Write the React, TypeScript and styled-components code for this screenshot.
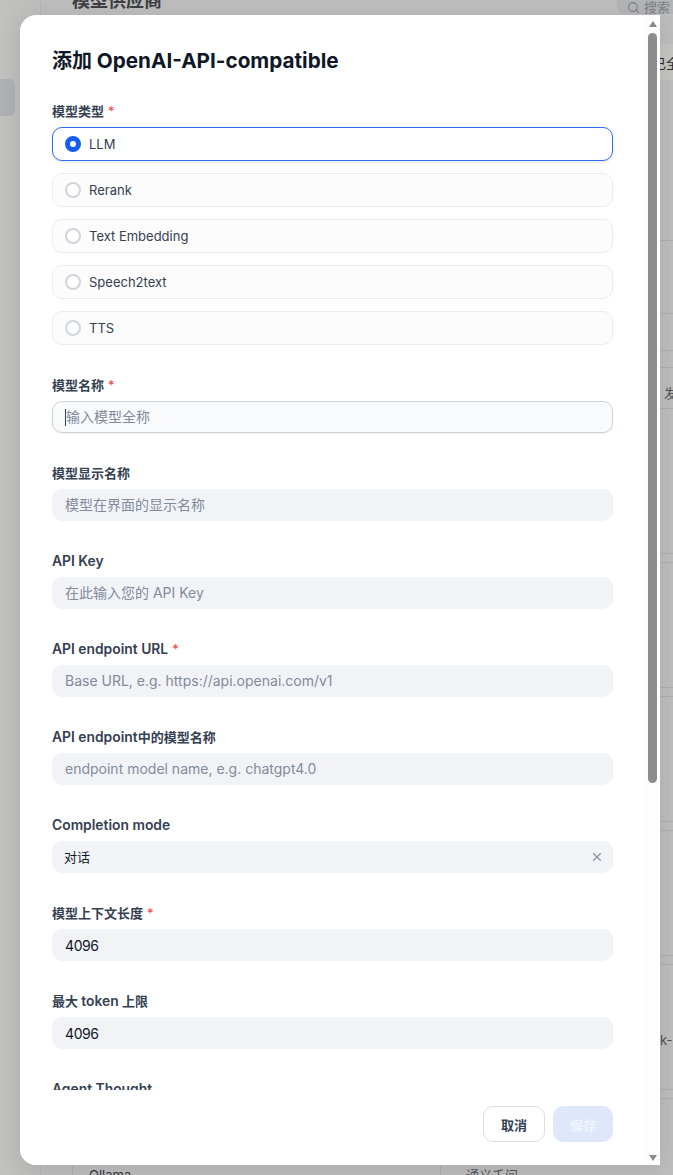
import React from "react";
import styled, { createGlobalStyle } from "styled-components";
import { Search, X } from "lucide-react";

const GlobalStyle = createGlobalStyle`
  html, body { margin: 0; padding: 0; height: 100%; }
  body { overflow: hidden; font-family: Inter, "Noto Sans CJK SC", "Liberation Sans", sans-serif; }
  * { box-sizing: border-box; }
`;

const Page = styled.div`
  position: relative;
  width: 673px;
  height: 1175px;
  overflow: hidden;
  display: flex;
  background: #bcbdbc;
`;
const Sidebar = styled.aside`
  width: 41px;
  flex: none;
  padding-top: 79px;
  border-right: 1px solid #b2b3b3;
  background: linear-gradient(90deg, #c1c1c0, #bcbdbc);
`;
const SideItem = styled.div`
  width: 15px;
  height: 37px;
  border-radius: 0 6px 6px 0;
  background: #b0b1b5;
`;
const Main = styled.main`
  flex: 1;
  min-width: 0;
  padding-left: 31px;
`;
const TopBar = styled.header`
  height: 44px;
  display: flex;
  justify-content: space-between;
  align-items: flex-start;
`;
const PageTitle = styled.h1`
  margin: -13px 0 0;
  font-size: 18px;
  line-height: 28px;
  font-weight: 600;
  color: #3c3e42;
`;
const SearchBox = styled.div`
  width: 56px;
  height: 14px;
  padding: 0 0 0 10px;
  border-radius: 0 0 0 8px;
  background: #b3b4b6;
  display: flex;
  align-items: flex-end;
  gap: 4px;
  font-size: 13px;
  line-height: 14px;
  color: #7c7f85;
  overflow: hidden;
  white-space: nowrap;
  svg { flex: none; }
`;
const Band = styled.div`
  height: 36px;
  display: flex;
  align-items: center;
  padding-left: 581px;
  background: #c4c4c1;
  font-size: 13px;
  color: #2a2c30;
  overflow: hidden;
  white-space: nowrap;
`;
const Row = styled.div<{ $h: number }>`
  height: ${(p) => p.$h}px;
  display: flex;
  border-bottom: 1px solid #adaeae;
`;
const LeftCell = styled.div`
  width: 369px;
  flex: none;
  padding: 68px 0 0 16px;
  border-left: 1px solid #adaeae;
  border-right: 1px solid #adaeae;
  font-size: 13px;
  line-height: 16px;
  color: #33353a;
`;
const RightCell = styled.div<{ $top: number; $left: number }>`
  flex: 1;
  padding: ${(p) => p.$top}px 0 0 ${(p) => p.$left}px;
  font-size: 13px;
  line-height: 16px;
  white-space: nowrap;
  overflow: hidden;
  color: #50545c;
`;

const Dialog = styled.section`
  position: absolute;
  left: 20px;
  top: 15px;
  width: 640px;
  height: 1150px;
  display: flex;
  background: #fff;
  border-radius: 16px 0 0 16px;
  box-shadow: 0 4px 24px rgba(0, 0, 0, 0.1);
  overflow: hidden;
`;
const DialogColumn = styled.div`
  flex: 1;
  min-width: 0;
  display: flex;
  flex-direction: column;
`;
const DialogBody = styled.div`
  flex: 1;
  min-height: 0;
  overflow: hidden;
  padding: 32px 32px 0;
`;
const DialogTitle = styled.h2`
  margin: 0 0 26px;
  font-size: 20px;
  line-height: 28px;
  font-weight: 700;
  color: #101828;
`;
const TitleLatin = styled.span`
  font-size: 20.7px;
`;
const Field = styled.div`
  margin-bottom: 30px;
`;
const Label = styled.label`
  display: block;
  height: 20px;
  margin-bottom: 6px;
  font-size: 13px;
  line-height: 20px;
  font-weight: 600;
  color: #354052;
  white-space: nowrap;
`;
const LatinText = styled.span`
  font-size: 13.85px;
`;
const Star = styled.span`
  margin-left: 4px;
  color: #f04438;
  font-weight: 400;
`;
const OptionList = styled.div`
  display: flex;
  flex-direction: column;
  gap: 12px;
`;
const Option = styled.div<{ $active?: boolean }>`
  height: 34px;
  display: flex;
  align-items: center;
  gap: 8px;
  padding-left: 12px;
  border-radius: 10px;
  border: 1px solid ${(p) => (p.$active ? "#2f6df2" : "#eaecf0")};
  box-shadow: ${(p) => (p.$active ? "0 1px 3px rgba(16,24,40,.12)" : "none")};
  background: ${(p) => (p.$active ? "#fff" : "#fcfcfd")};
  font-size: 13px;
  color: #354052;
`;
const Radio = styled.span<{ $active?: boolean }>`
  width: 16px;
  height: 16px;
  flex: none;
  border-radius: 50%;
  border: ${(p) => (p.$active ? "5px solid #155eef" : "2px solid #d0d5dd")};
  background: #fff;
`;
const Input = styled.input<{ $focus?: boolean; $filled?: boolean }>`
  display: block;
  width: 100%;
  height: 32px;
  padding: 0 13px ${(p) => (p.$filled ? "0" : "2px")};
  border-radius: 10px;
  border: ${(p) => (p.$focus ? "1px solid #cdd2db" : "none")};
  background: ${(p) => (p.$focus ? "#f9fafb" : "#f2f3f7")};
  box-shadow: ${(p) => (p.$focus ? "0 1px 2px rgba(16,24,40,.06)" : "none")};
  outline: none;
  font-family: inherit;
  font-size: 14px;
  letter-spacing: ${(p) => (p.$filled ? "-0.4px" : "0")};
  color: #101828;
  &::placeholder { color: #828b9b; opacity: 1; }
`;
const CaretWrap = styled.div`
  position: relative;
  &::after {
    content: "";
    position: absolute;
    left: 13px;
    top: 8px;
    width: 1px;
    height: 17px;
    background: #1a3fa8;
  }
`;
const Select = styled.div`
  height: 32px;
  display: flex;
  align-items: center;
  justify-content: space-between;
  padding: 0 9px 2px 12px;
  border-radius: 10px;
  background: #f2f3f7;
  font-size: 13px;
  color: #101828;
  svg { color: #8a93a3; margin-top: 2px; }
`;
const Footer = styled.footer`
  flex: none;
  height: 75px;
  padding: 16px 32px 0;
  display: flex;
  justify-content: flex-end;
  gap: 8px;
  background: #fff;
`;
const Button = styled.button<{ $primary?: boolean }>`
  height: 36px;
  width: ${(p) => (p.$primary ? "60px" : "62px")};
  padding: 0;
  border-radius: 10px;
  border: ${(p) => (p.$primary ? "none" : "1px solid #dfdfdf")};
  background: ${(p) => (p.$primary ? "#dfe8fb" : "#fff")};
  color: ${(p) => (p.$primary ? "#f0f4fd" : "#354052")};
  font-family: inherit;
  font-size: 13px;
  font-weight: 600;
`;
const ScrollTrack = styled.div`
  width: 15px;
  flex: none;
  padding-top: 6px;
  display: flex;
  flex-direction: column;
  align-items: center;
  background: #fdfdfd;
`;
const Arrow = styled.span<{ $down?: boolean }>`
  width: 0;
  height: 0;
  flex: none;
  border-left: 4.5px solid transparent;
  border-right: 4.5px solid transparent;
  ${(p) => (p.$down ? "border-top" : "border-bottom")}: 6px solid #8a8a8a;
`;
const Thumb = styled.div`
  width: 9px;
  height: 750px;
  flex: none;
  margin: 6px 0 auto;
  border-radius: 5px;
  background: #8c8c8c;
`;
const ArrowSpace = styled.div`
  height: 4px;
  flex: none;
`;

const rows: { h: number; top?: number; left?: number; text?: string }[] = [
  { h: 161 }, { h: 73 }, { h: 37 }, { h: 17 },
  { h: 41, top: 17, left: 223, text: "发布" },
  { h: 145 }, { h: 9 }, { h: 125 }, { h: 9 }, { h: 125 }, { h: 9 }, { h: 125 }, { h: 9 },
  { h: 125, top: 67, left: 219, text: "k-" },
  { h: 9 },
];

const plainFields = [
  { label: <>模型显示名称</>, key: "display", placeholder: "模型在界面的显示名称" },
  { label: <LatinText>API Key</LatinText>, key: "key", placeholder: "在此输入您的 API Key" },
  { label: <LatinText>API endpoint URL</LatinText>, key: "url", placeholder: "Base URL, e.g. https://api.openai.com/v1", required: true },
  { label: <><LatinText>API endpoint</LatinText>中的模型名称</>, key: "name", placeholder: "endpoint model name, e.g. chatgpt4.0" },
];

export default function App() {
  return (
    <Page>
      <GlobalStyle />
      <Sidebar>
        <SideItem />
      </Sidebar>
      <Main>
        <TopBar>
          <PageTitle>模型供应商</PageTitle>
          <SearchBox>
            <Search size={13} />
            <span>搜索</span>
          </SearchBox>
        </TopBar>
        <Band>已全部</Band>
        {rows.map((r, i) => (
          <Row key={i} $h={r.h}>
            <LeftCell />
            <RightCell $top={r.top ?? 0} $left={r.left ?? 0}>{r.text}</RightCell>
          </Row>
        ))}
        <Row $h={90}>
          <LeftCell>Ollama</LeftCell>
          <RightCell $top={68} $left={25}>通义千问</RightCell>
        </Row>
      </Main>

      <Dialog>
        <DialogColumn>
          <DialogBody>
            <DialogTitle>添加 <TitleLatin>OpenAI-API-compatible</TitleLatin></DialogTitle>
            <Field>
              <Label>模型类型<Star>*</Star></Label>
              <OptionList>
                {["LLM", "Rerank", "Text Embedding", "Speech2text", "TTS"].map((t, i) => (
                  <Option key={t} $active={i === 0}>
                    <Radio $active={i === 0} />
                    {t}
                  </Option>
                ))}
              </OptionList>
            </Field>
            <Field>
              <Label>模型名称<Star>*</Star></Label>
              <CaretWrap>
                <Input $focus placeholder="输入模型全称" />
              </CaretWrap>
            </Field>
            {plainFields.map((f) => (
              <Field key={f.key}>
                <Label>{f.label}{f.required && <Star>*</Star>}</Label>
                <Input placeholder={f.placeholder} />
              </Field>
            ))}
            <Field>
              <Label><LatinText>Completion mode</LatinText></Label>
              <Select>
                <span>对话</span>
                <X size={14} />
              </Select>
            </Field>
            <Field>
              <Label>模型上下文长度<Star>*</Star></Label>
              <Input $filled defaultValue="4096" />
            </Field>
            <Field>
              <Label>最大 <LatinText>token</LatinText> 上限</Label>
              <Input $filled defaultValue="4096" />
            </Field>
            <Field>
              <Label><LatinText>Agent Thought</LatinText></Label>
            </Field>
          </DialogBody>
          <Footer>
            <Button>取消</Button>
            <Button $primary>保存</Button>
          </Footer>
        </DialogColumn>
        <ScrollTrack>
          <Arrow />
          <Thumb />
          <Arrow $down />
          <ArrowSpace />
        </ScrollTrack>
      </Dialog>
    </Page>
  );
}
